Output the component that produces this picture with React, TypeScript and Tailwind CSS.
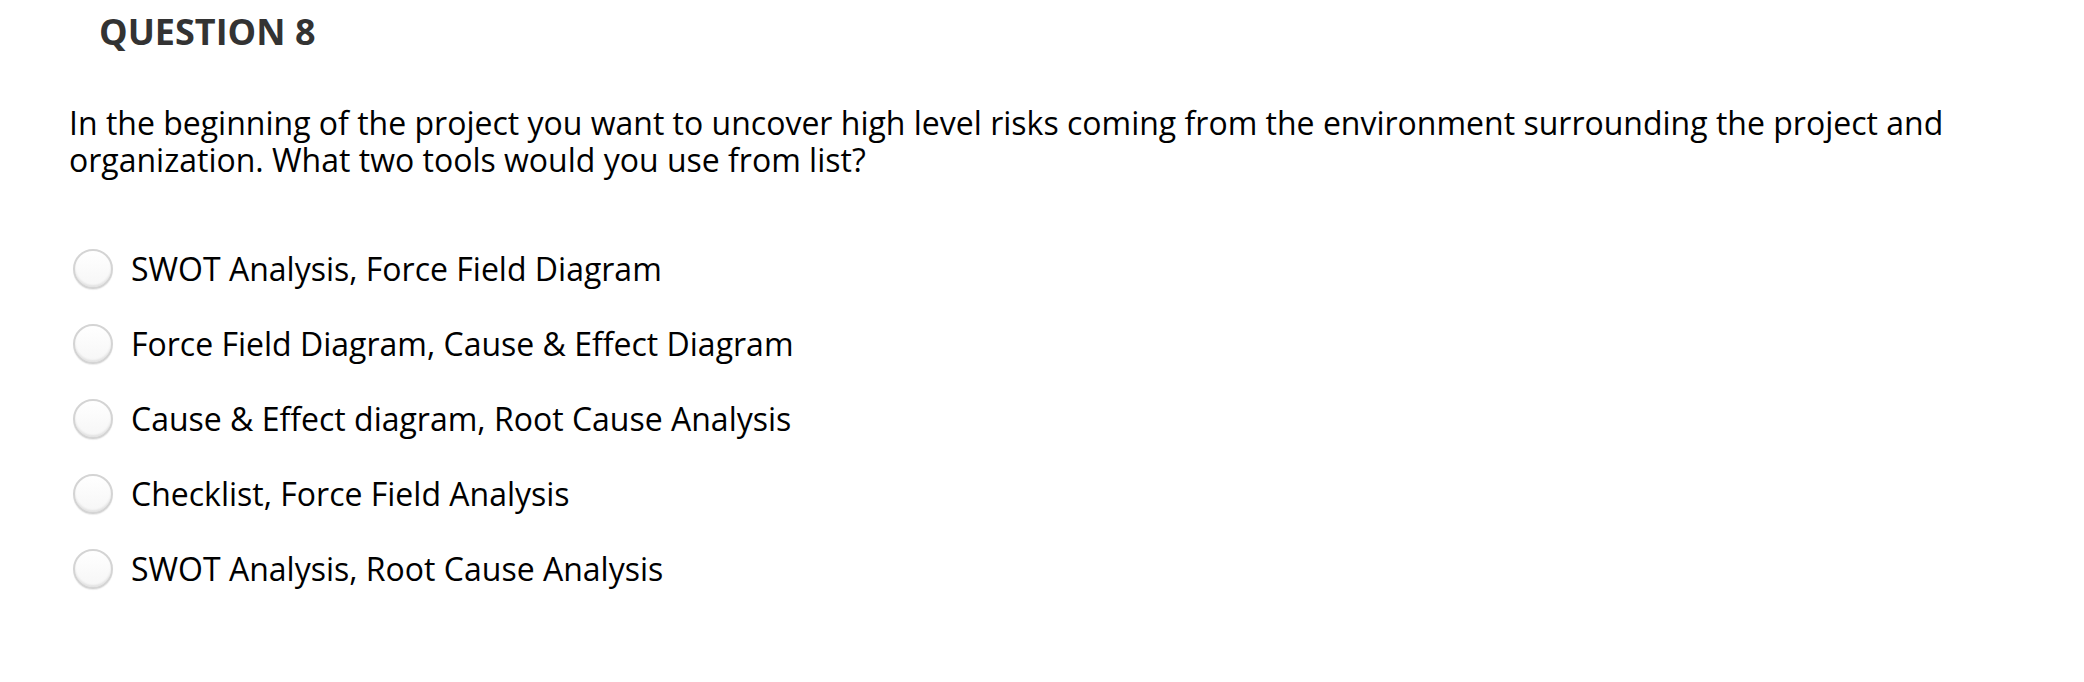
import React from 'react';

const options = [
  'SWOT Analysis, Force Field Diagram',
  'Force Field Diagram, Cause & Effect Diagram',
  'Cause & Effect diagram, Root Cause Analysis',
  'Checklist, Force Field Analysis',
  'SWOT Analysis, Root Cause Analysis',
];

const Radio: React.FC = () => (
  <span className="block w-[40px] h-[40px] shrink-0 rounded-full border-2 border-[#d4d4d4] bg-gradient-to-b from-white to-[#f6f6f6] shadow-[inset_0_-2px_2px_rgba(0,0,0,0.08),0_1px_1px_rgba(0,0,0,0.08)]" />
);

export default function App() {
  return (
    <div className="w-[2084px] h-[682px] bg-white font-['Open_Sans',sans-serif]">
      <h1 className="pl-[99px] pt-[10px] text-[36px] leading-[44px] font-bold text-[#333333]">QUESTION 8</h1>

      <p className="mt-[50px] pl-[69px] w-[2000px] text-[32px] leading-[37px] text-black">
        In the beginning of the project you want to uncover high level risks coming from the environment surrounding the project and organization. What two tools would you use from list?
      </p>

      <ul className="mt-[70px] flex flex-col gap-[33px] pl-[73px]">
        {options.map(opt => (
          <li key={opt} className="flex items-center gap-[18px] h-[42px]">
            <Radio />
            <span className="text-[32px] leading-[42px] text-black">{opt}</span>
          </li>
        ))}
      </ul>
    </div>
  );
}
